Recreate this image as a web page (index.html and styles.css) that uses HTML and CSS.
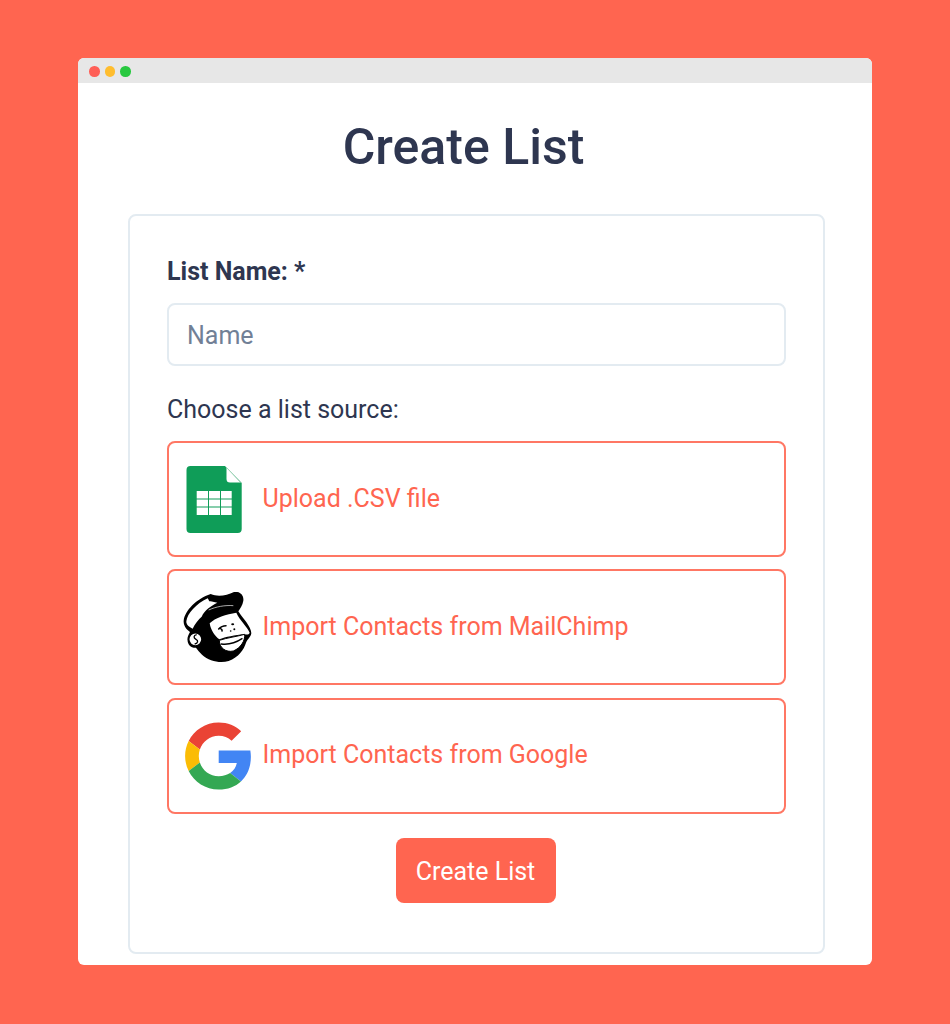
FILE: index.html
```html
<!DOCTYPE html>
<html lang="en">
<head>
<meta charset="utf-8">
<title>Create List</title>
<link rel="stylesheet" href="styles.css">
</head>
<body>
<main class="window">
  <div class="titlebar">
    <span class="dot dot-red"></span>
    <span class="dot dot-yellow"></span>
    <span class="dot dot-green"></span>
  </div>
  <div class="content">
    <h1 class="title">Create List</h1>
    <form class="card">
      <label class="label" for="name">List Name: *</label>
      <input class="input" id="name" type="text" placeholder="Name">
      <p class="choose">Choose a list source:</p>
      <div class="sources">
        <a class="source">
          <svg class="icon" viewBox="0 0 70 70" aria-hidden="true">
            <path fill="#0F9D58" d="M7.500 2H42L58.700 19V65a4 4 0 0 1-4 4H7.500a4 4 0 0 1-4-4V6a4 4 0 0 1 4-4z"/>
            <path fill="#fff" d="M43.500 3.500L57.500 18.500H47a3.500 3.500 0 0 1-3.500-3.500z"/>
            <path fill="none" stroke="#9fd3b8" stroke-width="1" d="M42.500 2.500L58.500 19"/>
            <path fill="#fff" d="M13.700 27H25V34.500H13.700zM26 27H37V34.500H26zM38 27H48.700V34.500H38zM13.700 35.500H25V42.500H13.700zM26 35.500H37V42.500H26zM38 35.500H48.700V42.500H38zM13.700 43.500H25V51H13.700zM26 43.500H37V51H26zM38 43.500H48.700V51H38z"/>
          </svg>
          <span>Upload .CSV file</span>
        </a>
        <a class="source">
          <svg class="icon" viewBox="39 36 210 210" aria-hidden="true">
            <path fill="#000" d="M41 122C44 92 80 56 122 42C145 52 170 46 192 36C210 33 222 46 220 62C218 76 210 86 205 94C218 115 244 140 244 160C242 172 232 178 228 188C222 208 206 232 176 243C150 250 118 244 96 224C88 216 82 208 78 203C60 204 50 190 53 172C55 165 58 160 60 156C50 148 40 138 41 122z"/>
            <path fill="#fff" d="M49 124C52 100 78 72 113 55C117 60 116 66 122 64L142 68C122 78 104 90 95 110C86 118 74 132 68 146C58 142 48 134 49 124z"/>
            <path fill="none" stroke="#fff" stroke-width="2" d="M116 90C138 80 165 75 190 77"/>
            <path fill="#fff" d="M119 130C135 113 170 103 199 98C210 122 232 140 239 158C236 166 228 164 222 162C196 166 166 170 148 178C134 168 122 150 119 130z"/>
            <path fill="none" stroke="#000" stroke-width="4.500" stroke-linecap="round" d="M146 147C152 140 160 137 168 137M150 145C155 147 157 150 156 153"/>
            <ellipse fill="#000" cx="188" cy="133" rx="4.500" ry="3"/>
            <circle fill="#000" cx="193" cy="148" r="3"/>
            <circle fill="#000" cx="182" cy="153" r="2.500"/>
            <path fill="#fff" stroke="#000" stroke-width="3" d="M148 181C172 173 200 170 224 163C226 182 212 204 190 213C168 218 148 204 148 181z"/>
            <path fill="none" stroke="#000" stroke-width="4" stroke-linecap="round" d="M154 192C178 195 198 188 216 176"/>
            <circle fill="#fff" stroke="#000" stroke-width="5" cx="76" cy="178" r="20"/>
            <path fill="none" stroke="#000" stroke-width="4" d="M80 164C70 166 70 174 78 178C86 182 84 190 74 192"/>
          </svg>
          <span>Import Contacts from MailChimp</span>
        </a>
        <a class="source">
          <svg class="icon" viewBox="-1.500 -1 50 50" aria-hidden="true">
            <path fill="#EA4335" d="M24 9.500c3.540 0 6.710 1.220 9.210 3.600l6.850-6.850C35.900 2.380 30.470 0 24 0 14.620 0 6.510 5.380 2.560 13.220l7.980 6.190C12.430 13.720 17.740 9.500 24 9.500z"/>
            <path fill="#4285F4" d="M46.980 24.550c0-1.570-.15-3.090-.38-4.550H24v9.020h12.940c-.58 2.960-2.260 5.480-4.780 7.180l7.730 6c4.510-4.180 7.090-10.360 7.090-17.650z"/>
            <path fill="#FBBC05" d="M10.530 28.590c-.48-1.450-.76-2.990-.76-4.590s.27-3.140.76-4.590l-7.980-6.190C.92 16.460 0 20.120 0 24c0 3.880.92 7.540 2.560 10.780l7.970-6.190z"/>
            <path fill="#34A853" d="M24 48c6.480 0 11.930-2.130 15.890-5.810l-7.730-6c-2.150 1.450-4.920 2.300-8.160 2.300-6.260 0-11.570-4.220-13.470-9.910l-7.980 6.190C6.510 42.620 14.620 48 24 48z"/>
          </svg>
          <span>Import Contacts from Google</span>
        </a>
      </div>
      <div class="actions">
        <button class="submit" type="button">Create List</button>
      </div>
    </form>
  </div>
</main>
</body>
</html>
```
FILE: styles.css
```css
* { box-sizing: border-box; }
html, body { margin: 0; height: 100%; }
body {
  background: #ff6550;
  padding: 58px 78px 59px;
  font-family: Roboto, "Liberation Sans", sans-serif;
  color: #2e3650;
}
.window {
  background: #fff;
  border-radius: 6px;
  height: 907px;
  overflow: hidden;
}
.titlebar {
  height: 25px;
  background: #e7e7e7;
  display: flex;
  align-items: center;
  gap: 5px;
  padding: 2px 0 0 11px;
}
.dot { width: 10.500px; height: 10.500px; border-radius: 50%; }
.dot-red { background: #ff5f57; }
.dot-yellow { background: #ffbd2e; }
.dot-green { background: #28c840; }
.content { padding: 0 47px 0 50px; }
.title {
  margin: 35px 0 38px;
  text-align: center;
  font-size: 50px;
  line-height: 58px;
  font-weight: 500;
  padding-right: 26px;
}
.card {
  border: 2px solid #e3ebf1;
  border-radius: 8px;
  height: 740px;
  padding: 41px 37px 0;
  background: #fff;
}
.label {
  display: block;
  font-size: 25px;
  line-height: 29px;
  font-weight: 700;
  margin-bottom: 17px;
}
.input {
  display: block;
  width: 100%;
  height: 63px;
  border: 2px solid #e3ebf1;
  border-radius: 8px;
  padding: 2px 18px 0;
  font: 400 25px Roboto, sans-serif;
  color: #2e3650;
  background: #fff;
  outline: none;
}
.input::placeholder { color: #718096; opacity: 1; }
.choose {
  margin: 29px 0 16px;
  font-size: 25px;
  line-height: 30px;
}
.sources { display: flex; flex-direction: column; gap: 12.400px; }
.source {
  display: flex;
  align-items: center;
  gap: 9.500px;
  height: 116px;
  padding-left: 14px;
  border: 2px solid #ff7764;
  border-radius: 8px;
  color: #ff6550;
  font-size: 25px;
}
.source span { padding-bottom: 2px; }
.icon { width: 70px; height: 70px; flex: none; }
.actions { display: flex; justify-content: center; margin-top: 24.500px; padding-right: 2px; }
.submit {
  width: 160px;
  height: 64.500px;
  border: 0;
  border-radius: 8px;
  padding: 2px 0 0;
  background: #ff6550;
  color: #fff;
  font: 400 25px Roboto, sans-serif;
}
```
